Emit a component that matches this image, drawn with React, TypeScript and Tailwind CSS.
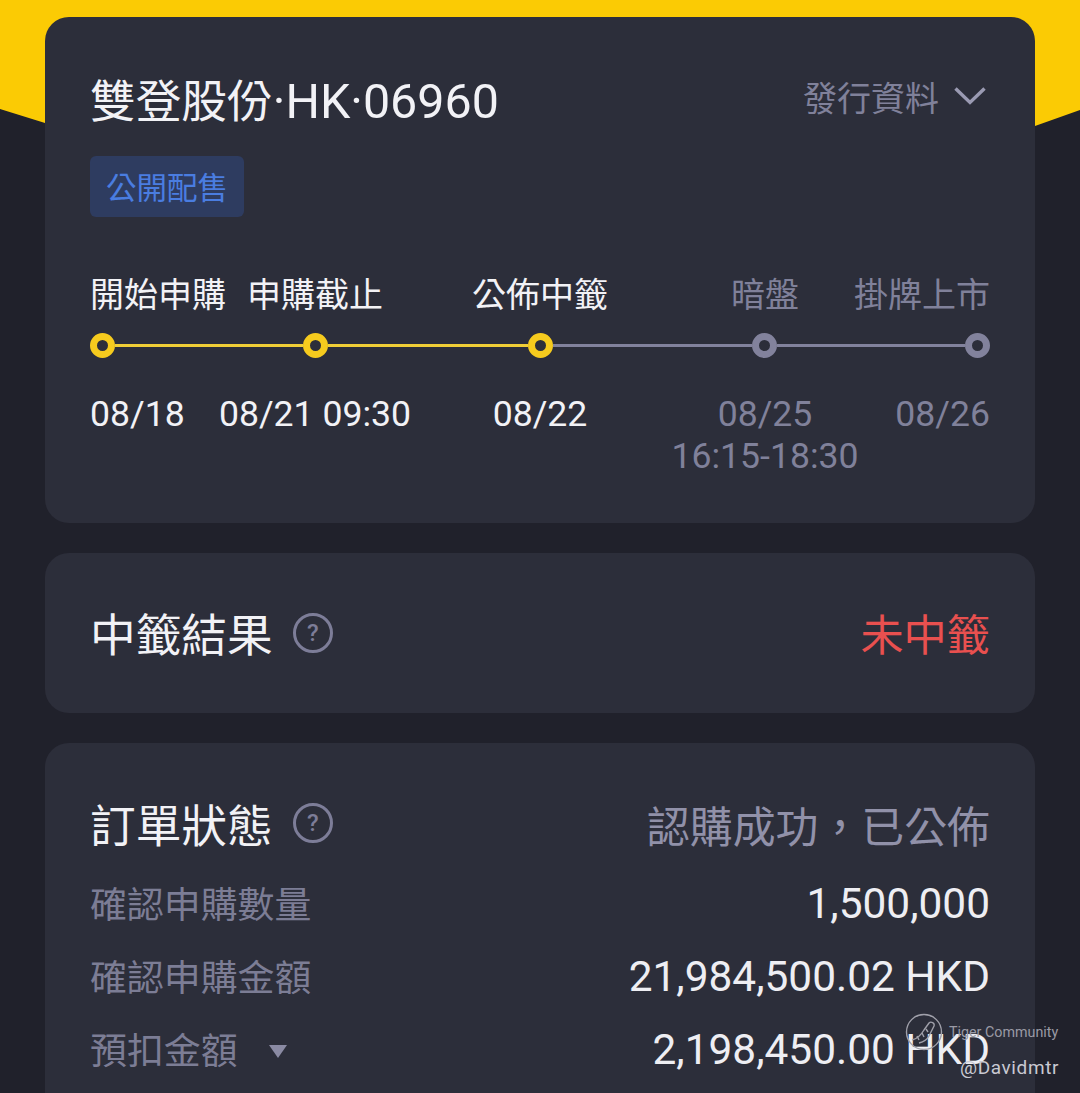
const font = "font-['Roboto','Noto_Sans_CJK_TC',sans-serif]";

const steps = [
  { label: "開始申購", date: ["08/18"], done: true, align: "justify-start", dateAlign: "items-start" },
  { label: "申購截止", date: ["08/21 09:30"], done: true, align: "justify-center", dateAlign: "items-center" },
  { label: "公佈中籤", date: ["08/22"], done: true, align: "justify-center", dateAlign: "items-center" },
  { label: "暗盤", date: ["08/25", "16:15-18:30"], done: false, align: "justify-center", dateAlign: "items-center" },
  { label: "掛牌上市", date: ["08/26"], done: false, align: "justify-end", dateAlign: "items-end" },
];

const Dot = ({ done }: { done: boolean }) => (
  <div className={`h-[25px] w-[25px] shrink-0 rounded-full border-[7px] ${done ? "border-[#f6cb1e]" : "border-[#82829c]"}`} />
);

const Help = () => (
  <div className="flex h-[40px] w-[40px] items-center justify-center rounded-full border-[3px] border-[#7d7d98] text-[24px] font-medium leading-none text-[#7d7d98]">
    ?
  </div>
);

const Row = ({ label, value, caret }: { label: string; value: string; caret?: boolean }) => (
  <div className="flex h-[73px] items-center justify-between">
    <div className="flex items-center pt-[4px] text-[36.9px] text-[#7c7d95]">
      {label}
      {caret && <div className="ml-[31px] h-0 w-0 border-x-[9px] border-t-[13px] border-x-transparent border-t-[#8a8aa3]" />}
    </div>
    <div className="text-[42.4px] text-[#eeeef3]">{value}</div>
  </div>
);

export default function App() {
  return (
    <div className={`relative h-[1093px] overflow-hidden bg-[#20212b] px-[45px] pt-[17px] ${font}`}>
      <svg className="absolute left-0 top-0" width="1080" height="130" viewBox="0 0 1080 130">
        <path d="M0 0H1080V110L1035 126H45V123L0 109Z" fill="#fbcb04" />
      </svg>

      <div className="relative flex flex-col gap-[30px]">
        <section className="h-[506px] rounded-[24px] bg-[#2c2e3a] px-[45px]">
          <div className="flex items-start justify-between pt-[54px]">
            <h1 className="text-[45.7px] font-normal leading-[62px] text-[#f2f2f6]">
              雙登股份<span className="text-[48.4px]">·HK·06960</span>
            </h1>
            <div className="flex items-center gap-[15px] text-[34px] leading-[56px] text-[#80819a]">
              發行資料
              <svg width="32" height="18" viewBox="0 0 32 18" fill="none" stroke="#9a9ab2" strokeWidth="3.4" className="-mt-[6px] mr-[4px]">
                <path d="M1.5 1.5L16 15.5L30.5 1.5" />
              </svg>
            </div>
          </div>

          <div className="mt-[22px] inline-block h-[61px] rounded-[6px] bg-[#2e3c60] px-[16px] text-[30.5px] leading-[66px] text-[#4a7de0]">
            公開配售
          </div>

          <div className="mt-[43px] grid grid-cols-[112.5px_225px_225px_225px_112.5px]">
            {steps.map((s) => (
              <div key={s.label} className={`flex whitespace-nowrap text-[34px] leading-[70px] ${s.align} ${s.done ? "text-[#f2f2f6]" : "text-[#80819a]"}`}>
                {s.label}
              </div>
            ))}
          </div>

          <div className="mt-[3px] flex items-center">
            <Dot done />
            <div className="h-[3px] w-[188px] bg-[#f0ce37]" />
            <Dot done />
            <div className="h-[3px] w-[200px] bg-[#f0ce37]" />
            <Dot done />
            <div className="h-[3px] w-[200px] bg-[#82829c]" />
            <Dot done={false} />
            <div className="h-[3px] w-[188px] bg-[#82829c]" />
            <Dot done={false} />
          </div>

          <div className="mt-[35px] grid grid-cols-[112.5px_225px_225px_225px_112.5px]">
            {steps.map((s) => (
              <div key={s.label} className={`flex flex-col whitespace-nowrap text-[35.6px] leading-[42px] ${s.dateAlign} ${s.done ? "text-[#f2f2f6]" : "text-[#80819a]"}`}>
                {s.date.map((d) => (
                  <div key={d}>{d}</div>
                ))}
              </div>
            ))}
          </div>
        </section>

        <section className="flex h-[160px] items-center justify-between rounded-[24px] bg-[#2c2e3a] px-[45px]">
          <div className="flex items-center gap-[20px]">
            <span className="pt-[8px] text-[45.7px] leading-none text-[#f2f2f6]">中籤結果</span>
            <div className="mt-[1px]"><Help /></div>
          </div>
          <span className="pt-[8px] text-[43.2px] leading-none text-[#e9504f]">未中籤</span>
        </section>

        <section className="h-[400px] rounded-t-[24px] bg-[#2c2e3a] px-[45px] pt-[55px]">
          <div className="mb-[9px] flex items-center justify-between">
            <div className="flex items-center gap-[20px]">
              <span className="text-[45.7px] leading-[60px] text-[#f2f2f6]">訂單狀態</span>
              <div className="-mt-[10px]"><Help /></div>
            </div>
            <span className="text-[42.9px] leading-[60px] text-[#9191a9]">認購成功，已公佈</span>
          </div>
          <Row label="確認申購數量" value="1,500,000" />
          <Row label="確認申購金額" value="21,984,500.02 HKD" />
          <Row label="預扣金額" value="2,198,450.00 HKD" caret />
        </section>
      </div>

      <div className="absolute left-[905px] top-[1013px] flex items-start text-[#a0a0aa]">
        <svg width="38" height="38" viewBox="0 0 38 38" fill="none" stroke="currentColor" strokeWidth="1.4">
          <circle cx="19" cy="19" r="17.5" />
          <path d="M7 27c5-1 9-5 12-10l5-7c2-2 6 0 5 3l-5 10c-2 4-6 6-10 7" />
          <path d="M12 23l2 4M17 20l2 4M21 16l2 3" />
        </svg>
        <span className="ml-[6px] mt-[12px] text-[14.3px] leading-none text-[#9a9aa5]">Tiger Community</span>
      </div>
      <div className="absolute right-[21px] top-[1058px] text-[19px] leading-none tracking-[0.6px] text-[#c9c9d2]">@Davidmtr</div>
    </div>
  );
}
